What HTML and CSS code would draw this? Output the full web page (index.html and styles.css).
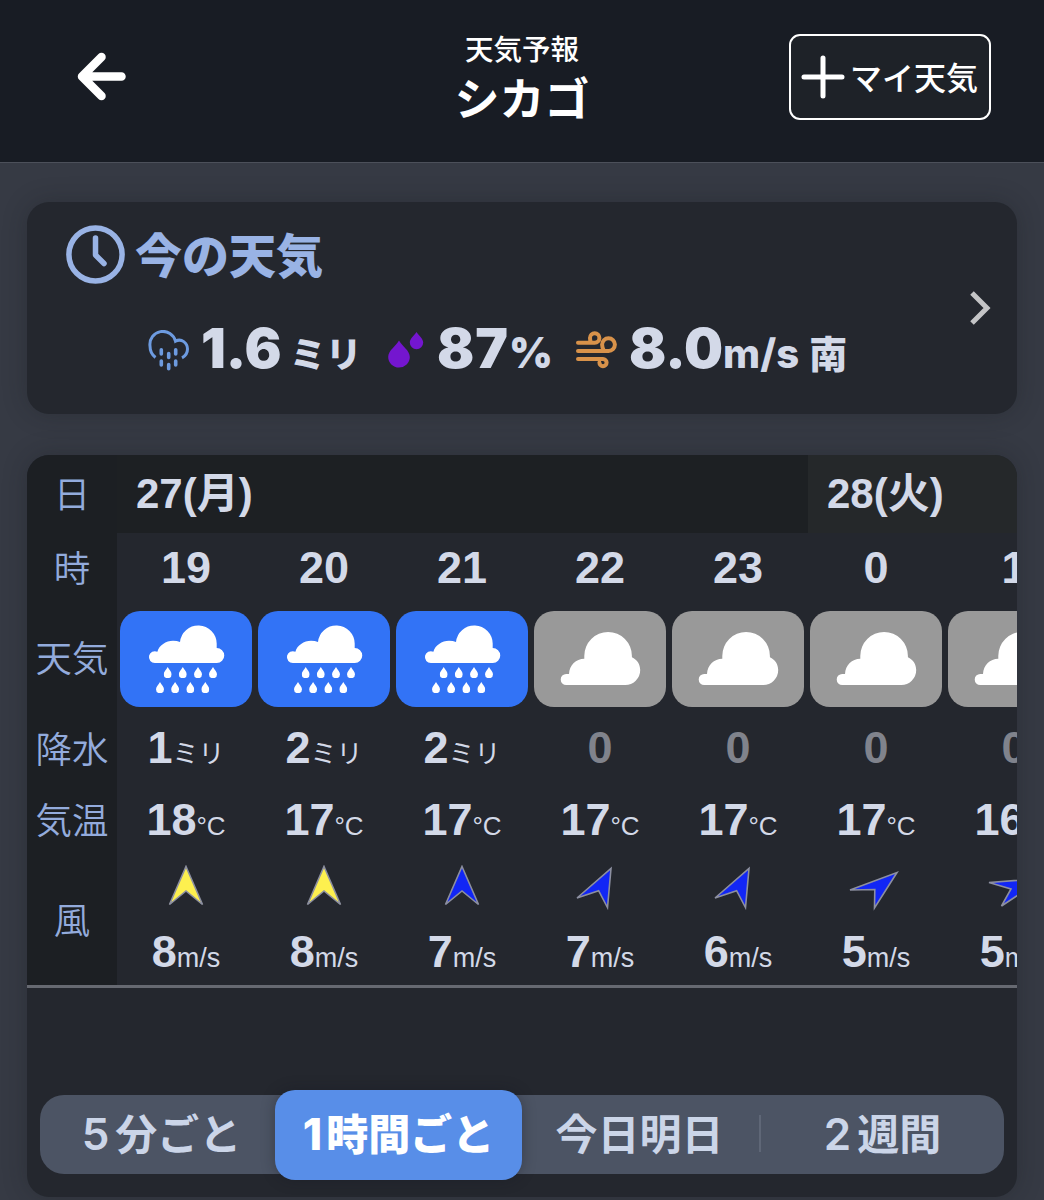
FILE: index.html
```html
<!DOCTYPE html>
<html lang="ja">
  <head>
    <meta charset="UTF-8" />
    <meta name="viewport" content="width=device-width, initial-scale=1" />
    <title>天気予報 シカゴ</title>
    <link rel="stylesheet" href="styles.css">
  </head>
  <body>
    <!-- shared shapes -->
    <svg class="sprites" width="0" height="0">
      <symbol id="drop" viewBox="0 0 8 11">
        <path d="M4 0C5.5 2.6 8 4.8 8 7.2A4 4 0 0 1 0 7.2C0 4.8 2.5 2.6 4 0Z" />
      </symbol>
      <symbol id="rain" viewBox="0 0 132 96">
        <path d="M35 52A5.9 5.9 0 1 1 37.4 40.8C39 34.5 46 29.8 53 29.8Q57 29.8 60 31A18.4 18.4 0 0 1 96.7 32.5V37A7.5 7.5 0 0 1 96.8 52Z" />
        <use href="#drop" x="43.7" y="56" width="8" height="11" />
        <use href="#drop" x="58.8" y="56" width="8" height="11" />
        <use href="#drop" x="74" y="56" width="8" height="11" />
        <use href="#drop" x="89" y="56" width="8" height="11" />
        <use href="#drop" x="36" y="71" width="8" height="11" />
        <use href="#drop" x="51.1" y="71" width="8" height="11" />
        <use href="#drop" x="66.3" y="71" width="8" height="11" />
        <use href="#drop" x="81.3" y="71" width="8" height="11" />
      </symbol>
      <symbol id="cloud" viewBox="0 0 132 96">
        <path d="M32.2 74A5.5 5.5 0 0 1 32.2 63H35C35.5 54 42 47.7 50.3 47.7V44.8A23.8 23.8 0 0 1 97.9 44.8V46.3C103 48.5 106.2 53.5 106.2 59A15 15 0 0 1 91 74Z" />
      </symbol>
      <symbol id="arrow-n" viewBox="0 0 60 46">
        <path d="M30 1.5L46.5 39.5L30 26L13.5 39.5Z" />
      </symbol>
      <symbol id="arrow-nne" viewBox="0 0 60 46">
        <path d="M41 3.5L37.5 42.5L28.6 25.7L7 33Z" />
      </symbol>
      <symbol id="arrow-ne" viewBox="0 0 60 46">
        <path d="M51 7.5L28.5 43L28.8 24.5L4 25Z" />
      </symbol>
      <symbol id="arrow-ene" viewBox="0 0 60 46">
        <path d="M59 13.5L17.5 41L27 24L5 17.5Z" />
      </symbol>
    </svg>

    <header class="header">
      <svg class="back" viewBox="0 0 50 50">
        <path d="M24.5 5L5 24.5L24.5 44M5 24.5H44.5" />
      </svg>
      <div class="title">
        <div class="title-sub">天気予報</div>
        <div class="title-main">シカゴ</div>
      </div>
      <button class="my-weather">
        <svg class="plus" viewBox="0 0 44 44">
          <path d="M22 3V41M3 22H41" />
        </svg>
        <span>マイ天気</span>
      </button>
    </header>

    <main>
      <section class="card now">
        <div class="now-body">
          <div class="now-head">
            <svg class="clock" viewBox="0 0 60 60">
              <circle cx="30.5" cy="30.5" r="26.6" />
              <path d="M30.5 14V31L39 39.5" />
            </svg>
            <h2>今の天気</h2>
          </div>
          <div class="now-values">
            <svg class="icon-rain" viewBox="0 0 42 42">
              <path d="M7.5 27.5C3.5 24.5 2 20.5 2 16A13 13 0 0 1 27.5 11.2C33.5 8 39.5 13 39.5 19C39.5 22.5 37.5 26 34 27.8" />
              <path class="drops" d="M13.3 19.8V24M13.3 31V35M20.7 23.6V27.4M20.7 34.6V38.8M27.7 19.8V24M27.7 31V35" />
            </svg>
            <div class="metric rainfall"><b>1.6</b><span>ミリ</span></div>
            <svg class="icon-humid" viewBox="0 0 36 36">
              <path d="M11 8.5C14 14 21.8 18.5 21.8 25A10.8 10.6 0 0 1 .2 25C.2 18.5 8 14 11 8.5Z" />
              <path d="M28.5 0C30.5 3.5 35.2 6.5 35.2 10.6A6.7 6.6 0 0 1 21.8 10.6C21.8 6.5 26.5 3.5 28.5 0Z" />
            </svg>
            <div class="metric humidity"><b>87</b><span>%</span></div>
            <svg class="icon-wind" viewBox="0 0 42 38">
              <path d="M2 11.7H18.7A4.7 4.7 0 1 0 14 7Q14 9.5 15 11.7M2 20H32.5A6.4 6.4 0 1 0 26.1 13.6Q26.1 17 28 20M2 28H27A3.6 3.6 0 1 1 23.4 31.6" />
            </svg>
            <div class="metric wind"><b>8.0</b><span>m/s</span><i>南</i></div>
          </div>
        </div>
        <svg class="chevron" viewBox="0 0 22 36">
          <path d="M3 3L18 18L3 33" />
        </svg>
      </section>

      <section class="card forecast">
        <div class="hourly">
          <div class="labels">
            <div class="label-day">日</div>
            <div class="label-hour">時</div>
            <div class="label-sky">天気</div>
            <div class="label-rain">降水</div>
            <div class="label-temp">気温</div>
            <div class="label-wind">風</div>
          </div>
          <div class="scroller">
            <div class="days">
              <div class="day today">27(月)</div>
              <div class="day">28(火)</div>
            </div>
            <div class="hours">
              <div class="col">
                <div class="hour">19</div>
                <svg class="tile rainy"><use href="#rain" /></svg>
                <div class="rain">1<small>ミリ</small></div>
                <div class="temp">18<small>°C</small></div>
                <svg class="arrow strong"><use href="#arrow-n" /></svg>
                <div class="speed">8<small>m/s</small></div>
              </div>
              <div class="col">
                <div class="hour">20</div>
                <svg class="tile rainy"><use href="#rain" /></svg>
                <div class="rain">2<small>ミリ</small></div>
                <div class="temp">17<small>°C</small></div>
                <svg class="arrow strong"><use href="#arrow-n" /></svg>
                <div class="speed">8<small>m/s</small></div>
              </div>
              <div class="col">
                <div class="hour">21</div>
                <svg class="tile rainy"><use href="#rain" /></svg>
                <div class="rain">2<small>ミリ</small></div>
                <div class="temp">17<small>°C</small></div>
                <svg class="arrow"><use href="#arrow-n" /></svg>
                <div class="speed">7<small>m/s</small></div>
              </div>
              <div class="col">
                <div class="hour">22</div>
                <svg class="tile"><use href="#cloud" /></svg>
                <div class="rain none">0</div>
                <div class="temp">17<small>°C</small></div>
                <svg class="arrow"><use href="#arrow-nne" /></svg>
                <div class="speed">7<small>m/s</small></div>
              </div>
              <div class="col">
                <div class="hour">23</div>
                <svg class="tile"><use href="#cloud" /></svg>
                <div class="rain none">0</div>
                <div class="temp">17<small>°C</small></div>
                <svg class="arrow"><use href="#arrow-nne" /></svg>
                <div class="speed">6<small>m/s</small></div>
              </div>
              <div class="col">
                <div class="hour">0</div>
                <svg class="tile"><use href="#cloud" /></svg>
                <div class="rain none">0</div>
                <div class="temp">17<small>°C</small></div>
                <svg class="arrow"><use href="#arrow-ne" /></svg>
                <div class="speed">5<small>m/s</small></div>
              </div>
              <div class="col">
                <div class="hour">1</div>
                <svg class="tile"><use href="#cloud" /></svg>
                <div class="rain none">0</div>
                <div class="temp">16<small>°C</small></div>
                <svg class="arrow"><use href="#arrow-ene" /></svg>
                <div class="speed">5<small>m/s</small></div>
              </div>
            </div>
          </div>
        </div>

        <nav class="tabs">
          <div class="tab tab-5min"><span class="num">5</span>分ごと</div>
          <div class="tab active"><span class="num">1</span>時間ごと</div>
          <div class="tab tab-today">今日明日</div>
          <div class="tab tab-week"><span class="num">2</span>週間</div>
        </nav>
      </section>
    </main>
  </body>
</html>
```
FILE: styles.css
```css
* {
  box-sizing: border-box;
}
body {
  margin: 0;
  height: 1200px;
  overflow: hidden;
  background: #363a44;
  color: #d3d9e8;
  font-family: "Liberation Sans", "Noto Sans CJK JP", sans-serif;
}
.sprites {
  display: block;
}
.header {
  display: flex;
  align-items: flex-start;
  justify-content: space-between;
  height: 163px;
  padding: 34px 53px 0 77px;
  background: #181c24;
  border-bottom: 1px solid #4c505a;
  color: #fff;
  font-family: "Noto Sans CJK JP", sans-serif;
}
.back {
  width: 50px;
  height: 50px;
  margin: 18px 128px 0 0;
  fill: none;
  stroke: #fff;
  stroke-width: 8.5;
  stroke-linecap: round;
  stroke-linejoin: round;
}
.title {
  text-align: center;
}
.title-sub {
  font-size: 28.5px;
  line-height: 28px;
  font-weight: 500;
}
.title-main {
  font-size: 45px;
  line-height: 69px;
  font-weight: 700;
}
.my-weather {
  display: flex;
  align-items: center;
  width: 202px;
  height: 86px;
  padding: 0 0 0 10px;
  background: #1e2228;
  border: 2.5px solid #fff;
  border-radius: 11px;
  color: #fff;
  font-family: inherit;
  font-size: 32px;
  font-weight: 500;
  white-space: nowrap;
}
.my-weather span {
  padding-bottom: 3px;
}
.plus {
  flex: none;
  width: 44px;
  height: 44px;
  margin-right: 5px;
  fill: none;
  stroke: #fff;
  stroke-width: 5;
  stroke-linecap: round;
}
main {
  padding: 39px 27px 0;
}
.card {
  background: #24272e;
  border-radius: 22px;
  box-shadow: 0 0 24px rgba(24, 26, 30, 0.3);
}

/* current weather */
.now {
  display: flex;
  justify-content: space-between;
  height: 212px;
  padding: 22px 26px 0 38px;
}
.now-head {
  display: flex;
  align-items: center;
  height: 60px;
  gap: 10px;
  color: #99b3e5;
}
.clock {
  width: 60px;
  height: 60px;
  fill: none;
  stroke: #99b3e5;
  stroke-width: 5.5;
  stroke-linecap: round;
  stroke-linejoin: round;
}
.now h2 {
  margin: -3px 0 0;
  font-family: "Noto Sans CJK JP", sans-serif;
  font-size: 47px;
  line-height: 60px;
  font-weight: 900;
}
.now-values {
  display: flex;
  margin: 30px 0 0 83px;
  height: 70px;
  font-family: Inter, "Noto Sans CJK JP", sans-serif;
}
.now-values svg {
  flex: none;
  margin-top: 16px;
}
.icon-rain {
  width: 42px;
  height: 42px;
  fill: none;
  stroke: #6d9be0;
  stroke-width: 3;
}
.drops {
  stroke-width: 3.6;
  stroke-linecap: round;
}
.icon-humid {
  width: 36px;
  height: 36px;
  fill: #7416cf;
}
.now-values .icon-humid {
  margin-top: 18px;
}
.icon-wind {
  width: 42px;
  height: 38px;
  fill: none;
  stroke: #d8924a;
  stroke-width: 4;
  stroke-linecap: round;
}
.now-values .icon-wind {
  margin-top: 17px;
}
.metric {
  display: flex;
  align-items: baseline;
  line-height: 69px;
  white-space: nowrap;
}
.metric b {
  font-size: 55px;
  font-weight: 900;
}
.metric span {
  font-size: 40px;
  font-weight: 800;
}
.metric i {
  margin-left: 10px;
  font-size: 38px;
  font-style: normal;
  font-weight: 800;
}
.rainfall {
  width: 198px;
  padding-left: 11px;
}
.rainfall span {
  margin-left: 8px;
  font-size: 36px;
}
.humidity {
  width: 152px;
  padding-left: 13px;
}
.humidity b {
  letter-spacing: 1px;
}
.humidity span {
  font-size: 42px;
  font-weight: 900;
}
.wind {
  padding-left: 11px;
}
.chevron {
  width: 22px;
  height: 36px;
  margin-top: 66px;
  fill: none;
  stroke: #c4c4c6;
  stroke-width: 5;
}

/* hourly table */
.forecast {
  height: 742px;
  margin-top: 41px;
  overflow: hidden;
}
.hourly {
  display: flex;
  height: 533px;
  border-bottom: 3px solid #666971;
}
.labels {
  flex: none;
  width: 90px;
  background: #1c1f23;
  color: #93abdc;
  font-family: "Noto Sans CJK JP", sans-serif;
  font-size: 36.5px;
  font-weight: 350;
  text-align: center;
}
.label-day {
  line-height: 76px;
}
.label-hour {
  line-height: 72px;
}
.label-sky {
  line-height: 108px;
}
.label-rain {
  line-height: 74px;
}
.label-temp {
  line-height: 68px;
}
.label-wind {
  line-height: 132px;
}
.scroller {
  flex: 1;
  overflow: hidden;
}
.days {
  display: flex;
  width: 966px;
}
.day {
  flex: none;
  width: 276px;
  height: 78px;
  padding-left: 19px;
  background: #25282a;
  font-size: 42px;
  line-height: 77px;
  font-weight: 700;
}
.today {
  width: 691px;
  background: #1d2023;
}
.hours {
  display: flex;
  width: 966px;
}
.col {
  flex: none;
  display: flex;
  flex-direction: column;
  align-items: center;
  width: 138px;
  font-size: 45px;
  font-weight: 700;
  white-space: nowrap;
}
.col small {
  font-size: 27px;
  font-weight: 400;
}
.hour {
  height: 78px;
  line-height: 70px;
}
.tile {
  width: 132px;
  height: 96px;
  background: #999;
  border-radius: 20px;
  fill: #fff;
}
.rainy {
  background: #3273f6;
}
.rain {
  height: 76px;
  line-height: 82px;
}
.none {
  color: #80838c;
}
.rain small {
  font-size: 26px;
}
.temp {
  height: 82px;
  line-height: 74px;
}
.temp small {
  font-size: 26px;
}
.arrow {
  width: 60px;
  height: 46px;
  fill: #1226f5;
  stroke: #8c8fa0;
  stroke-width: 1.6;
}
.strong {
  fill: #fdf04f;
}
.speed {
  height: 70px;
  line-height: 82px;
}

/* range switch */
.tabs {
  display: flex;
  align-items: center;
  height: 79px;
  margin: 107px 13px 0;
  background: #4c5464;
  border-radius: 24px;
  color: #cbd5e8;
  font-family: Inter, "Noto Sans CJK JP", sans-serif;
  font-size: 42px;
  font-weight: 600;
  white-space: nowrap;
}
.tab {
  line-height: 82px;
  text-align: center;
}
.num {
  margin-right: 6px;
  font-size: 44px;
}
.tab-5min {
  width: 235px;
  padding-left: 8px;
}
.active {
  width: 247px;
  height: 90px;
  line-height: 89px;
  border-radius: 20px;
  background: #588ee8;
  color: #fff;
  font-weight: 800;
  box-shadow: 0 0 14px rgba(20, 24, 34, 0.35);
}
.active .num {
  margin-right: 4px;
}
.tab-today {
  position: relative;
  width: 239px;
  padding-right: 4px;
}
.tab-today::after {
  content: "";
  position: absolute;
  top: 21px;
  right: 0;
  width: 2px;
  height: 37px;
  background: #5f6777;
}
.tab-week {
  flex: 1;
}
```
